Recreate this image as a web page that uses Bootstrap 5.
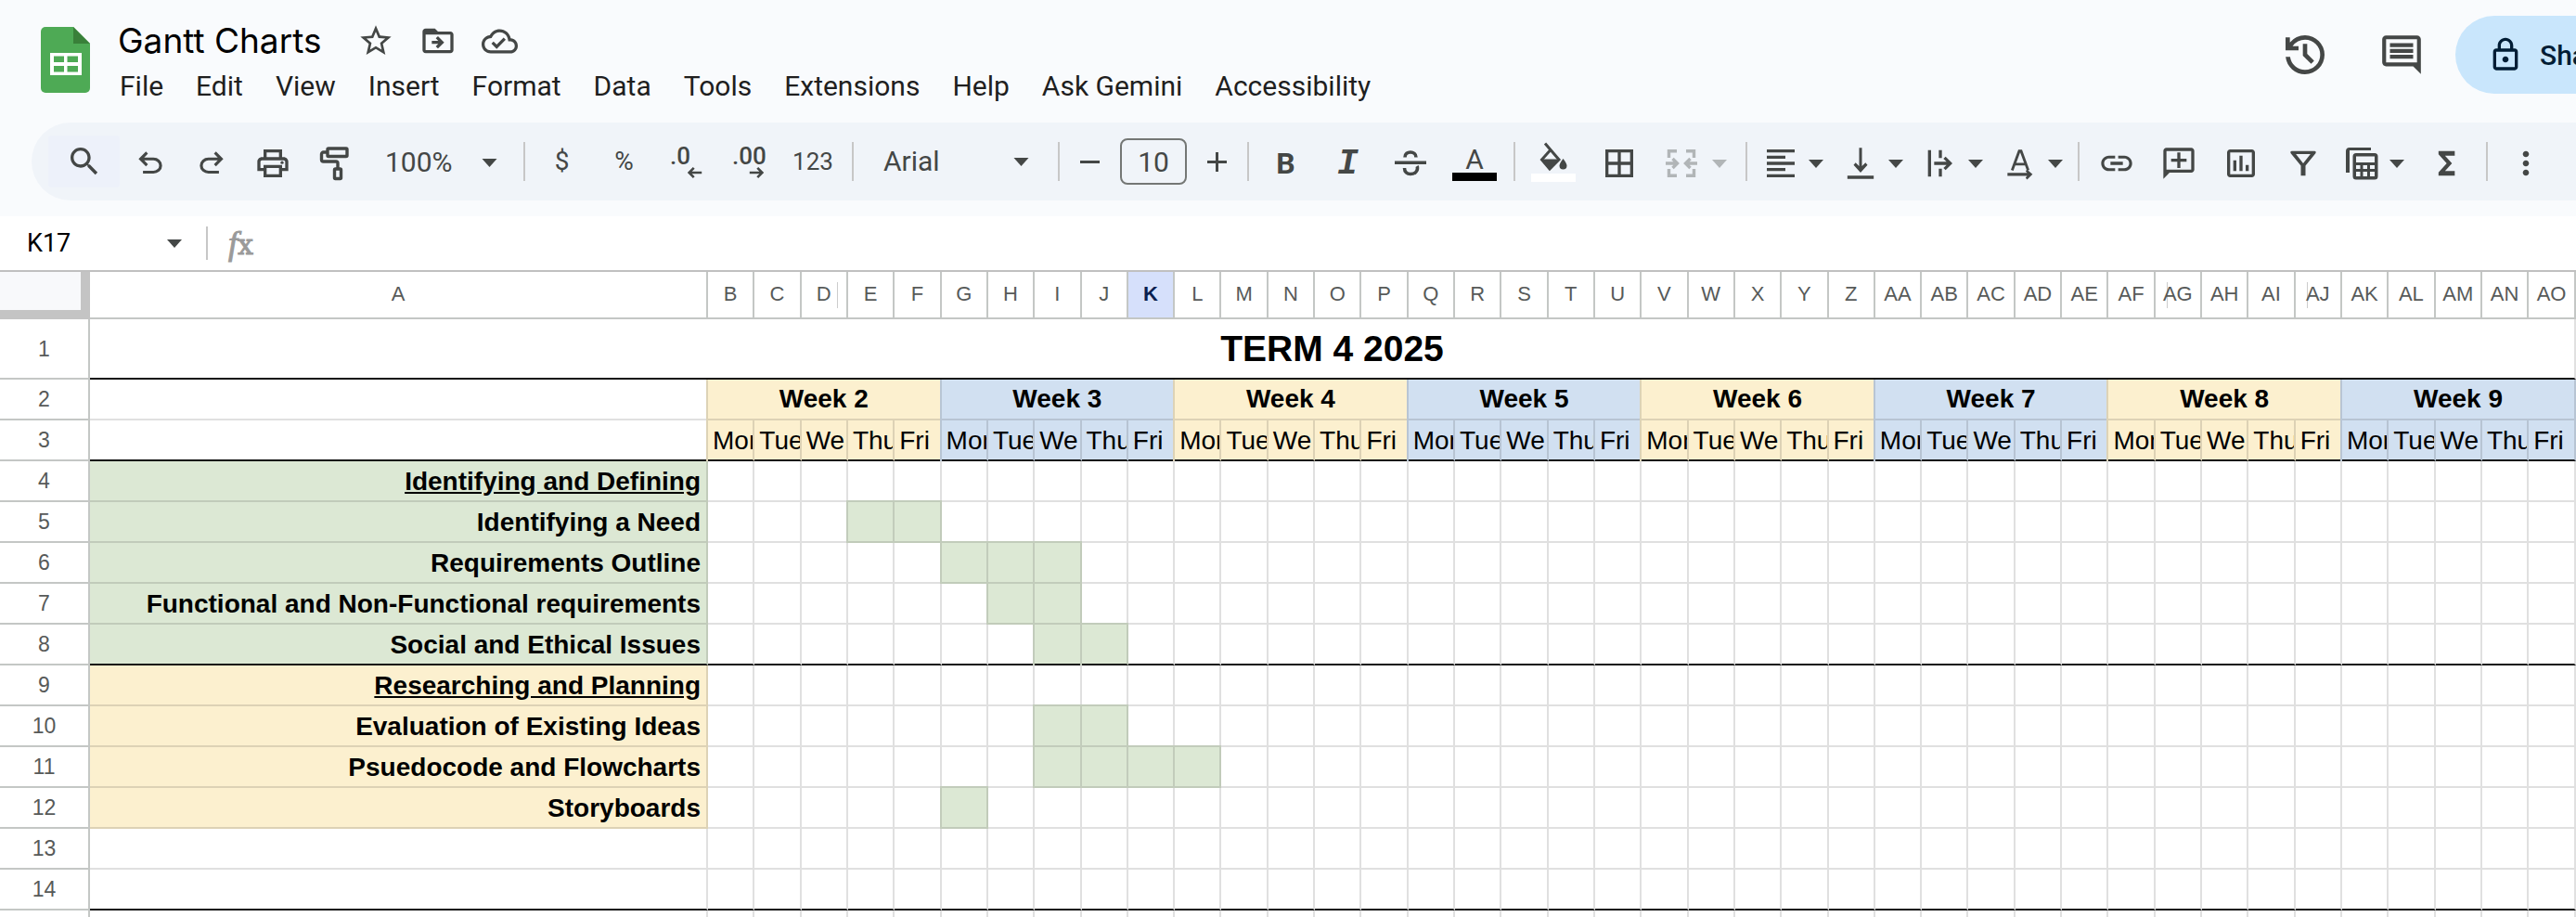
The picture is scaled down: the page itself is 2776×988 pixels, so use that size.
<!DOCTYPE html>
<html lang="en">
<head>
<meta charset="utf-8">
<meta name="viewport" content="width=device-width, initial-scale=1">
<title>Gantt Charts</title>
<link href="https://cdn.jsdelivr.net/npm/bootstrap@5.3.0/dist/css/bootstrap.min.css" rel="stylesheet">
<style>
  :root { --ink: #444746; --rule: #c4c7c5; --bar: #f0f4f9; --yellow: #fcf0cf; --blue: #d1e0f1; --green: #dce8d4; }
  body { font-family: Roboto, "Liberation Sans", sans-serif; color: #1f1f1f; background: #fff; overflow: hidden; }
  button, input, select { font-family: inherit; color: inherit; background: transparent; border: 0; padding: 0; }
  svg { fill: currentColor; flex: none; display: block; }
  .chrome { background: #f9fbfd; padding-bottom: 17px; }
  .titlebar { height: 132px; padding-left: 44px; overflow: hidden; }
  .logo { margin-top: 29px; }
  .doc { margin-left: 30px; padding-top: 22px; }
  .doc-row { height: 44px; color: var(--ink); }
  .doc-name { font-family: Inter, Roboto, sans-serif; font-size: 37px; line-height: 42px; font-weight: 400; color: #000; width: 220px; margin-right: 24px; white-space: nowrap; }
  .doc-row button { width: 67px; height: 44px; }
  .menus { margin-top: 7px; gap: 35px; padding-left: 2px; }
  .menus button { font-size: 30px; line-height: 40px; white-space: nowrap; }
  .actions { margin-top: 17px; height: 84px; color: var(--ink); }
  .round { width: 84px; height: 84px; margin-right: 16px; }
  .history { margin-right: 20px; }
  .share { width: 280px; height: 84px; margin-right: -150px; padding-left: 34px; gap: 17px; border-radius: 42px; background: #c9e6fc; color: #001d35; font-size: 30px; font-weight: 500; }
  .tools { height: 84px; margin-left: 34px; padding-left: 18px; background: var(--bar); border-radius: 42px 0 0 42px; color: var(--ink); overflow: hidden; }
  .tools button, .pick { flex: none; height: 56px; display: flex; align-items: center; justify-content: center; }
  .t-s { width: 53px; } .t-m { width: 66px; } .t-n { width: 67px; } .t-l { width: 72px; } .t-f { width: 70px; }
  .tools .drop { width: 86px; gap: 10px; }
  .tools .drop-wide { width: 94px; gap: 16px; opacity: .36; }
  .tools .low { padding-top: 4px; }
  .find { width: 77px; background: #edf1fa; border-radius: 4px; }
  .split { flex: none; width: 2px; height: 42px; margin: 0 6px; background: #c7c7c7; }
  .pick select { appearance: none; flex: 1; min-width: 0; font-size: 30px; line-height: 40px; outline: 0; }
  .zoom { width: 165px; padding: 2px 22px 0; }
  .face { width: 208px; padding: 0 25px 0 26px; }
  .size { flex: none; width: 72px; height: 50px; margin: 0 6px; border: 2px solid #747775; border-radius: 8px; text-align: center; font-size: 30px; }
  .sym { font-size: 28px; line-height: 40px; }
  .num { font-size: 26px; }
  .tools .decimals { font-size: 26px; line-height: 24px; font-weight: 500; flex-direction: column; align-items: flex-start; padding: 0 16px; }
  .decimals svg { align-self: flex-end; }
  .swatch { flex-direction: column; }
  .swatch i { display: block; width: 48px; height: 9px; background: #000; }
  .swatch .glyph { font-size: 30px; line-height: 27px; height: 28px; }
  .swatch .white { background: #fff; }
  .bold { font-size: 32px; font-weight: 700; }
  .ital { font: italic bold 38px "Liberation Mono", monospace; }
  .formula { height: 60px; border-bottom: 2px solid #c0c0c0; padding-left: 29px; }
  .formula .cell-name { width: 151px; font-size: 27px; color: #000; outline: 0; }
  .formula .split { height: 36px; margin: 0 22px 0 26px; }
  .fx { font: italic 36px/40px "Liberation Serif", serif; color: #9a9a9a; -webkit-text-stroke: 1px; }
  .fx b { font: 30px "DejaVu Serif", serif; }
  .sheet { width: 100%; table-layout: fixed; border-collapse: separate; border-spacing: 0; font-family: "Liberation Sans", Arial, sans-serif; color: #000; }
  .sheet th, .sheet td { padding: 0; height: 44px; line-height: 36px; overflow: hidden; white-space: nowrap; border: 0 solid rgba(0, 0, 0, .12); border-width: 0 2px 2px 0; vertical-align: middle; font-size: 28px; }
  .c-num { width: 97px; } .c-task { width: 666px; }
  .sheet thead th { height: 51px; font-size: 22px; font-weight: 400; text-align: center; color: #575a59; border-color: var(--rule); padding-bottom: 2px; }
  .sheet tbody th { font-size: 23px; font-weight: 400; text-align: center; color: #575a59; border-color: var(--rule); }
  .sheet thead .corner { background: #f8f9fb; border: 10px solid #c4c4c4; border-width: 0 10px 10px 0; }
  .sheet thead .picked { background: #d6e0fb; color: #0b1f4f; font-weight: 700; }
  .tick { background: linear-gradient(#ccc, #ccc) no-repeat 12px 11px / 1px 28px; }
  .tick-end { background-position: 38px 11px; }
  .sheet .term { height: 65px; text-align: center; font-size: 39px; font-weight: 700; }
  .sheet .heavy td { border-bottom-color: #111; }
  .sheet .week { text-align: center; font-weight: 700; }
  .sheet .day { padding: 2px 0 0 5px; text-overflow: clip; }
  .sheet .task { text-align: right; font-weight: 700; padding: 2px 6px 0 0; }
  .yellow { background: var(--yellow); } .blue { background: var(--blue); } .green { background: var(--green); }
  .week.yellow, .day.yellow:not(.mid) { box-shadow: -2px 0 #ddd3b6; }
  .week.blue, .day.blue:not(.mid) { box-shadow: -2px 0 #b8c5d4; }
  .done { background: var(--green); box-shadow: -2px 0 #c2ccbb, 0 -2px #c2ccbb, -2px -2px #c2ccbb; }
</style>
</head>
<body>
<svg width="0" height="0" class="position-absolute" aria-hidden="true"><defs>
  <symbol id="caret" viewBox="0 0 16 9"><path d="M0 0h16L8 9z"/></symbol>
</defs></svg>

<header class="chrome">
  <div class="titlebar d-flex align-items-start">
    <svg class="logo" width="53" height="71" viewBox="0 0 53 71"><path fill="#4eaa55" d="M5 0h30l18 18v48a5 5 0 0 1-5 5H5a5 5 0 0 1-5-5V5a5 5 0 0 1 5-5z"/><path fill="#398039" d="M35 0l18 18H35z"/><path fill="#fff" fill-rule="evenodd" d="M10 28h34v24H10zM14 31.500v6.500h11v-6.500zM28.500 31.500v6.500H40v-6.500zM14 42v6.500h11V42zM28.500 42v6.500H40V42z"/></svg>
    <div class="doc">
      <div class="doc-row d-flex align-items-center">
        <h1 class="doc-name mb-0">Gantt Charts</h1>
        <button class="d-flex align-items-center justify-content-center" aria-label="Star"><svg width="40" height="40" viewBox="0 0 24 24"><path d="M22 9.240l-7.190-.62L12 2 9.190 8.630 2 9.240l5.460 4.730L5.820 21 12 17.270 18.180 21l-1.630-7.030L22 9.240zM12 15.400l-3.760 2.270 1-4.280-3.320-2.880 4.380-.38L12 6.100l1.710 4.040 4.380.38-3.320 2.880 1 4.280L12 15.400z"/></svg></button>
        <button class="d-flex align-items-center justify-content-center" aria-label="Move"><svg width="40" height="40" viewBox="0 0 24 24"><path d="M20 6h-8l-2-2H4c-1.100 0-2 .9-2 2v12c0 1.100.9 2 2 2h16c1.100 0 2-.9 2-2V8c0-1.100-.9-2-2-2zm0 12H4V8h16v10zm-7.840-6H8v2h4.160l-1.590 1.590L11.990 17 16 13.010 11.990 9l-1.410 1.410L12.160 12z"/></svg></button>
        <button class="d-flex align-items-center justify-content-center" aria-label="Saved to Drive"><svg width="39" height="39" viewBox="0 0 24 24"><path d="M19.350 10.040C18.670 6.590 15.640 4 12 4 9.110 4 6.600 5.640 5.350 8.040 2.340 8.360 0 10.910 0 14c0 3.310 2.690 6 6 6h13c2.760 0 5-2.240 5-5 0-2.640-2.050-4.780-4.650-4.960zM19 18H6c-2.210 0-4-1.790-4-4 0-2.050 1.530-3.760 3.560-3.970l1.070-.11.5-.95C8.080 7.140 9.940 6 12 6c2.620 0 4.880 1.860 5.390 4.430l.3 1.500 1.530.11c1.560.1 2.780 1.410 2.780 2.960 0 1.650-1.350 3-3 3zm-9-3.820l-2.090-2.090L6.500 13.500 10 17l6.010-6.010-1.410-1.410z"/></svg></button>
      </div>
      <nav class="menus d-flex">
        <button>File</button><button>Edit</button><button>View</button><button>Insert</button><button>Format</button><button>Data</button><button>Tools</button><button>Extensions</button><button>Help</button><button>Ask Gemini</button><button>Accessibility</button>
      </nav>
    </div>
    <div class="actions d-flex ms-auto">
      <button class="round history d-flex align-items-center justify-content-center" aria-label="Version history"><svg width="56" height="56" viewBox="0 -960 960 960"><path d="M480-120q-138 0-240.500-91.500T122-440h82q14 104 92.500 172T480-200q117 0 198.500-81.500T760-480q0-117-81.500-198.500T480-760q-69 0-129 32t-101 88h110v80H120v-240h80v94q51-64 124.500-99T480-840q75 0 140.500 28.500t114 77q48.500 48.500 77 114T840-480q0 75-28.500 140.500t-77 114q-48.500 48.500-114 77T480-120Zm112-192L440-464v-216h80v184l128 128-56 56Z"/></svg></button>
      <button class="round d-flex align-items-center justify-content-center" aria-label="Comments"><svg width="50" height="50" viewBox="0 0 24 24"><path d="M21.990 4c0-1.100-.89-2-1.990-2H4c-1.100 0-2 .9-2 2v12c0 1.100.9 2 2 2h14l4 4-.01-18zM20 4v12H4V4h16zM6 12h12v2H6zm0-3h12v2H6zm0-3h12v2H6z"/></svg></button>
      <button class="share d-flex align-items-center"><svg width="40" height="40" viewBox="0 0 24 24"><path d="M18 8h-1V6c0-2.760-2.240-5-5-5S7 3.240 7 6v2H6c-1.100 0-2 .9-2 2v10c0 1.100.9 2 2 2h12c1.100 0 2-.9 2-2V10c0-1.100-.9-2-2-2zM9 6c0-1.660 1.340-3 3-3s3 1.340 3 3v2H9V6zm9 14H6V10h12v10zm-6-3c1.100 0 2-.9 2-2s-.9-2-2-2-2 .9-2 2 .9 2 2 2z"/></svg>Share</button>
    </div>
  </div>

  <div class="tools d-flex align-items-center" role="toolbar" aria-label="Formatting">
    <button class="find" aria-label="Search"><svg width="40" height="40" viewBox="0 0 24 24"><path d="M15.500 14h-.79l-.28-.27C15.410 12.590 16 11.110 16 9.500 16 5.910 13.090 3 9.500 3S3 5.910 3 9.500 5.910 16 9.500 16c1.610 0 3.090-.59 4.230-1.570l.27.28v.79l5 4.990L20.490 19l-4.990-5zm-6 0C7.010 14 5 11.990 5 9.500S7.010 5 9.500 5 14 7.010 14 9.500 11.990 14 9.500 14z"/></svg></button>
    <button class="t-m low" aria-label="Undo"><svg width="38" height="38" viewBox="0 -960 960 960"><path d="M280-200v-80h284q63 0 109.500-40T720-420q0-60-46.500-100T564-560H312l104 104-56 56-200-200 200-200 56 56-104 104h252q97 0 166.500 63T800-420q0 94-69.500 157T564-200H280Z"/></svg></button>
    <button class="t-m low" aria-label="Redo"><svg width="38" height="38" viewBox="0 -960 960 960"><path d="M396-200q-97 0-166.500-63T160-420q0-94 69.500-157T396-640h252L544-744l56-56 200 200-200 200-56-56 104-104H396q-63 0-109.500 40T240-420q0 60 46.500 100T396-280h284v80H396Z"/></svg></button>
    <button class="t-m low" aria-label="Print"><svg width="40" height="40" viewBox="0 0 24 24"><path d="M19 8h-1V3H6v5H5c-1.660 0-3 1.340-3 3v6h4v4h12v-4h4v-6c0-1.660-1.340-3-3-3zM8 5h8v3H8V5zm8 12v2H8v-4h8v2zm2-2v-2H6v2H4v-4c0-.55.45-1 1-1h14c.55 0 1 .45 1 1v4h-2z"/><circle cx="18" cy="11.500" r="1"/></svg></button>
    <button class="t-m low" aria-label="Paint format"><svg width="34" height="38" viewBox="0 0 34 38"><g fill="none" stroke="currentColor" stroke-width="3.400"><rect x="10" y="3" width="21" height="8.500" rx="1"/><path d="M10 7H5.500a2 2 0 0 0-2 2v6a2 2 0 0 0 2 2H19a2 2 0 0 1 2 2v5"/><rect x="17.500" y="25" width="7" height="10.500" rx="1"/></g></svg></button>
    <label class="pick zoom"><select aria-label="Zoom"><option>100%</option></select><svg width="17" height="9"><use href="#caret"/></svg></label>
    <span class="split"></span>
    <button class="t-n sym">$</button>
    <button class="t-n sym">%</button>
    <button class="t-n decimals" aria-label="Decrease decimal places">.0<svg width="17" height="12" viewBox="0 0 18 14"><path d="M7 0l2.200 2-3.500 3.500H18v3H5.700L9.200 12 7 14 0 7z"/></svg></button>
    <button class="t-n decimals" aria-label="Increase decimal places">.00<svg width="17" height="12" viewBox="0 0 18 14"><path d="M11 0L8.800 2l3.500 3.500H0v3h12.300L8.800 12l2.200 2 7-7z"/></svg></button>
    <button class="t-l num">123</button>
    <span class="split"></span>
    <label class="pick face"><select aria-label="Font"><option>Arial</option></select><svg width="17" height="9"><use href="#caret"/></svg></label>
    <span class="split"></span>
    <button class="t-s" aria-label="Decrease font size"><svg width="21" height="21" viewBox="0 0 21 21"><path d="M0 9h21v3H0z"/></svg></button>
    <input class="size" value="10" aria-label="Font size">
    <button class="t-s" aria-label="Increase font size"><svg width="21" height="21" viewBox="0 0 21 21"><path d="M0 9h9V0h3v9h9v3h-9v9H9v-9H0z"/></svg></button>
    <span class="split"></span>
    <button class="t-n bold low">B</button>
    <button class="t-n ital low">I</button>
    <button class="t-n low" aria-label="Strikethrough"><svg width="34" height="34" viewBox="0 0 34 34"><path d="M0 14.500h34v3.500H0z"/><path fill="none" stroke="currentColor" stroke-width="3.600" d="M11 10.500c0-4 3-5.500 6-5.500s6 2 6 5.500M10.500 22c0 4.500 3 6.500 6.500 6.500s7.500-2 7.500-6.500c0-.8-.2-1.500-.5-2"/></svg></button>
    <button class="t-l swatch low" aria-label="Text colour"><span class="glyph">A</span><i></i></button>
    <span class="split"></span>
    <button class="t-f swatch" aria-label="Fill colour"><svg width="32" height="34" viewBox="0 0 32 34"><path fill="none" stroke="currentColor" stroke-width="3" d="M7 1.500L22 19 12 29 3.500 19 12 9.500"/><path d="M2.500 18.500h20L12 30zM26.500 18s4 5 4 7.500a4 4 0 0 1-8 0c0-2.500 4-7.500 4-7.500z"/></svg><i class="white"></i></button>
    <button class="t-l low" aria-label="Borders"><svg width="40" height="40" viewBox="0 0 24 24"><path d="M3 3v18h18V3H3zm8 16H5v-6h6v6zm0-8H5V5h6v6zm8 8h-6v-6h6v6zm0-8h-6V5h6v6z"/></svg></button>
    <button class="drop-wide low" disabled aria-label="Merge cells"><svg width="34" height="32" viewBox="0 0 34 32"><g fill="none" stroke="currentColor" stroke-width="3.400"><path d="M3.500 10V2.700H12M3.500 22v7.300H12M22 2.700h8.500V10M22 29.300h8.500V22M0 16h12M34 16H22M7.500 11l5 5-5 5M26.500 11l-5 5 5 5"/></g></svg><svg width="16" height="9"><use href="#caret"/></svg></button>
    <span class="split"></span>
    <button class="drop low" aria-label="Horizontal align"><svg width="40" height="40" viewBox="0 0 24 24"><path d="M15 15H3v2h12v-2zm0-8H3v2h12V7zM3 13h18v-2H3v2zm0 8h18v-2H3v2zM3 3v2h18V3H3z"/></svg><svg width="16" height="9"><use href="#caret"/></svg></button>
    <button class="drop low" aria-label="Vertical align"><svg width="40" height="40" viewBox="0 0 24 24"><path d="M16.500 14l-1.300-1.500-2.300 2.300V3h-1.800v11.800l-2.300-2.300L7.500 14l4.500 5zM3.500 21v2h17v-2z" transform="translate(0 -1)"/></svg><svg width="16" height="9"><use href="#caret"/></svg></button>
    <button class="drop low" aria-label="Text wrapping"><svg width="40" height="40" viewBox="0 0 24 24"><path d="M4 3.500h2v17H4zM11 3.500h2v5h-2zM11 15.500h2v5h-2zM8 11h8l-2-2 1.400-1.400L19.800 12l-4.400 4.400L14 15l2-2H8z"/></svg><svg width="16" height="9"><use href="#caret"/></svg></button>
    <button class="drop low" aria-label="Text rotation"><svg width="40" height="40" viewBox="0 0 24 24"><path fill="none" stroke="currentColor" stroke-width="1.700" d="M6.800 16.500L11.400 4h1.200l4.600 12.500M8.300 12.500h7.400"/><path d="M3.800 18.200h12.700l-1-1.200 1-1 3.500 3-3.500 3.500-1-1.200 1-1.200H3.800z"/></svg><svg width="16" height="9"><use href="#caret"/></svg></button>
    <span class="split"></span>
    <button class="t-n low" aria-label="Insert link"><svg width="40" height="40" viewBox="0 0 24 24"><path d="M3.900 12c0-1.710 1.390-3.100 3.100-3.100h4V7H7c-2.760 0-5 2.240-5 5s2.240 5 5 5h4v-1.900H7c-1.710 0-3.100-1.390-3.100-3.100zM8 13h8v-2H8v2zm9-6h-4v1.900h4c1.710 0 3.100 1.390 3.100 3.100s-1.390 3.100-3.100 3.100h-4V17h4c2.760 0 5-2.240 5-5s-2.240-5-5-5z"/></svg></button>
    <button class="t-n low" aria-label="Insert comment"><svg width="40" height="40" viewBox="0 0 24 24"><path d="M20 2H4c-1.100 0-2 .9-2 2v18l4-4h14c1.100 0 2-.9 2-2V4c0-1.100-.9-2-2-2zm0 14H4V4h16v12zM11 15h2v-4h4V9h-4V5h-2v4H7v2h4z"/></svg></button>
    <button class="t-n low" aria-label="Insert chart"><svg width="40" height="40" viewBox="0 0 24 24"><path d="M19 3H5c-1.100 0-2 .9-2 2v14c0 1.100.9 2 2 2h14c1.100 0 2-.9 2-2V5c0-1.100-.9-2-2-2zm0 16H5V5h14v14zM7 10h2v7H7zm4-3h2v10h-2zm4 6h2v4h-2z"/></svg></button>
    <button class="t-n low" aria-label="Filter"><svg width="40" height="40" viewBox="0 0 24 24"><path fill-rule="evenodd" d="M4.700 4h14.600c.9 0 1.200.8.700 1.500L13.500 13.500V20h-3v-6.500L4 5.500C3.500 4.800 3.800 4 4.700 4zm2.600 2l4.700 6 4.700-6z"/></svg></button>
    <button class="drop low" aria-label="Table views"><svg width="40" height="40" viewBox="0 0 40 40"><path fill-rule="evenodd" d="M7 3h23v3H7v24H3V7a4 4 0 0 1 4-4zM14 9h20a3.500 3.500 0 0 1 3.500 3.500V34a3.500 3.500 0 0 1-3.500 3.500H14a3.500 3.500 0 0 1-3.500-3.500V12.500A3.500 3.500 0 0 1 14 9zm0 3.500V19h20v-6.500zM14 22v4h4.500v-4zm7.500 0v4H26v-4zm7.500 0v4h5v-4zM14 29v5h4.500v-5zm7.500 0v5H26v-5zm7.500 0v5h5v-5z"/></svg><svg width="16" height="9"><use href="#caret"/></svg></button>
    <button class="t-l low" aria-label="Functions"><svg width="40" height="40" viewBox="0 0 24 24"><path d="M17 4H6.500v2.200l5.300 5.800-5.300 5.800V20H17v-3h-6.300l4.500-5-4.500-5H17z"/></svg></button>
    <span class="split"></span>
    <button class="t-f low" aria-label="More"><svg width="40" height="40" viewBox="0 0 24 24"><path d="M12 8c1.100 0 2-.9 2-2s-.9-2-2-2-2 .9-2 2 .9 2 2 2zm0 2c-1.100 0-2 .9-2 2s.9 2 2 2 2-.9 2-2-.9-2-2-2zm0 6c-1.100 0-2 .9-2 2s.9 2 2 2 2-.9 2-2-.9-2-2-2z"/></svg></button>
  </div>
</header>

<div class="formula d-flex align-items-center">
  <input class="cell-name" value="K17" aria-label="Name box">
  <svg width="16" height="9" color="#444746"><use href="#caret"/></svg>
  <span class="split"></span>
  <label class="fx" for="formula">f<b>x</b></label>
  <input id="formula" class="flex-grow-1">
</div>

<table class="sheet">
  <colgroup id="cols"><col class="c-num"><col class="c-task"></colgroup>
  <thead><tr id="letters"><th class="corner"></th><th>A</th></tr></thead>
  <tbody id="rows"></tbody>
</table>

<script src="https://cdn.jsdelivr.net/npm/bootstrap@5.3.0/dist/js/bootstrap.bundle.min.js"></script>
<script>
  const DAYS = 40;
  const letter = n => (n > 25 ? 'A' : '') + String.fromCharCode(65 + n % 26);
  const tone = w => w % 2 ? 'blue' : 'yellow';
  const headClass = { D: 'tick tick-end', AG: 'tick', AJ: 'tick', K: 'picked' };
  const tasks = [
    ['Identifying and Defining', 'green', [], true],
    ['Identifying a Need', 'green', ['E', 'F']],
    ['Requirements Outline', 'green', ['G', 'H', 'I']],
    ['Functional and Non-Functional requirements', 'green', ['H', 'I']],
    ['Social and Ethical Issues', 'green', ['I', 'J']],
    ['Researching and Planning', 'yellow', [], true],
    ['Evaluation of Existing Ideas', 'yellow', ['I', 'J']],
    ['Psuedocode and Flowcharts', 'yellow', ['I', 'J', 'K', 'L']],
    ['Storyboards', 'yellow', ['G']],
    ['', '', []], ['', '', []], ['', '', []]
  ];

  let heads = '', cols = '';
  for (let i = 1; i <= DAYS; i++) {
    cols += '<col>';
    heads += `<th class="${headClass[letter(i)] || ''}">${letter(i)}</th>`;
  }
  document.getElementById('cols').insertAdjacentHTML('beforeend', cols);
  document.getElementById('letters').insertAdjacentHTML('beforeend', heads);

  let html = `<tr class="heavy"><th>1</th><td class="term" colspan="${DAYS + 1}">TERM 4 2025</td></tr><tr><th>2</th><td></td>`;
  for (let w = 0; w < 8; w++) html += `<td class="week ${tone(w)}" colspan="5">Week ${w + 2}</td>`;
  html += '</tr><tr class="heavy"><th>3</th><td></td>';
  for (let w = 0; w < 8; w++)
    ['Mon', 'Tue', 'We', 'Thu', 'Fri'].forEach((d, i) => html += `<td class="day ${tone(w)} ${i ? 'mid' : ''}">${d}</td>`);
  html += '</tr>';
  tasks.forEach(([name, colour, done, heading], r) => {
    const n = r + 4;
    html += `<tr class="${n === 8 || n === 14 ? 'heavy' : ''}"><th>${n}</th><td class="task ${colour}">${heading ? `<u>${name}</u>` : name}</td>`;
    for (let i = 1; i <= DAYS; i++) html += `<td class="${done.includes(letter(i)) ? 'done' : ''}"></td>`;
    html += '</tr>';
  });
  document.getElementById('rows').innerHTML = html;
</script>
</body>
</html>
